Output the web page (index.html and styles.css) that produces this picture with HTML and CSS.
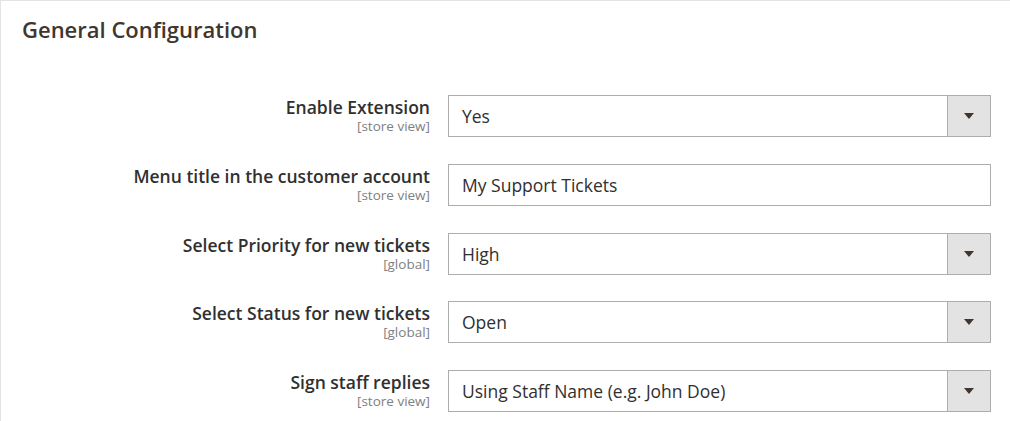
FILE: index.html
```html
<!DOCTYPE html>
<html lang="en">
<head>
    <meta charset="UTF-8">
    <title>General Configuration</title>
    <link rel="stylesheet" href="styles.css">
</head>
<body>

<div class="section">
    <h2 class="section-title">General Configuration</h2>

    <div class="fields">
        <div class="field">
            <label class="field-label">Enable Extension<span class="scope">[store view]</span></label>
            <div class="control select">
                <span class="value">Yes</span>
                <span class="arrow-btn"><span class="arrow"></span></span>
            </div>
        </div>

        <div class="field">
            <label class="field-label">Menu title in the customer account<span class="scope">[store view]</span></label>
            <div class="control">
                <span class="value">My Support Tickets</span>
            </div>
        </div>

        <div class="field">
            <label class="field-label">Select Priority for new tickets<span class="scope">[global]</span></label>
            <div class="control select">
                <span class="value">High</span>
                <span class="arrow-btn"><span class="arrow"></span></span>
            </div>
        </div>

        <div class="field">
            <label class="field-label">Select Status for new tickets<span class="scope">[global]</span></label>
            <div class="control select">
                <span class="value">Open</span>
                <span class="arrow-btn"><span class="arrow"></span></span>
            </div>
        </div>

        <div class="field">
            <label class="field-label">Sign staff replies<span class="scope">[store view]</span></label>
            <div class="control select">
                <span class="value">Using Staff Name (e.g. John Doe)</span>
                <span class="arrow-btn"><span class="arrow"></span></span>
            </div>
        </div>
    </div>
</div>

</body>
</html>
```

FILE: styles.css
```css
body {
    margin: 0;
    padding: 0;
    background-color: #fff;
    font-family: "Open Sans", "Liberation Sans", sans-serif;
    color: #303030;
}
.section {
    border-top: 1px solid #e3e3e3;
    border-left: 1px solid #e3e3e3;
    height: 420px;
    overflow: hidden;
}
.section-title {
    margin: 0;
    padding: 14px 0 0 21px;
    font-size: 22px;
    font-weight: 600;
    color: #41362f;
    line-height: 28px;
}
.fields {
    display: flex;
    flex-direction: column;
    gap: 26.75px;
    padding-top: 52px;
}
.field {
    display: grid;
    grid-template-columns: 429px 543px;
    column-gap: 18px;
    align-items: start;
}
.field-label {
    display: flex;
    flex-direction: column;
    align-items: flex-end;
    text-align: right;
    padding-top: 1px;
    font-size: 17.5px;
    font-weight: 600;
    line-height: 22px;
    color: #303030;
}
.scope {
    font-size: 13.5px;
    font-weight: 400;
    color: #808080;
    line-height: 17px;
}
.control {
    display: flex;
    align-items: center;
    height: 42px;
    box-sizing: border-box;
    border: 1px solid #adadad;
    background-color: #fff;
}
.value {
    flex: 1;
    padding-left: 13px;
    font-size: 17.5px;
    color: #303030;
}
.arrow-btn {
    display: flex;
    align-items: center;
    justify-content: center;
    width: 42px;
    height: 100%;
    background-color: #e3e3e3;
    border-left: 1px solid #adadad;
}
.arrow {
    width: 0;
    height: 0;
    border-style: solid;
    border-width: 6px 5px 0;
    border-color: #41362f transparent transparent;
}
```
